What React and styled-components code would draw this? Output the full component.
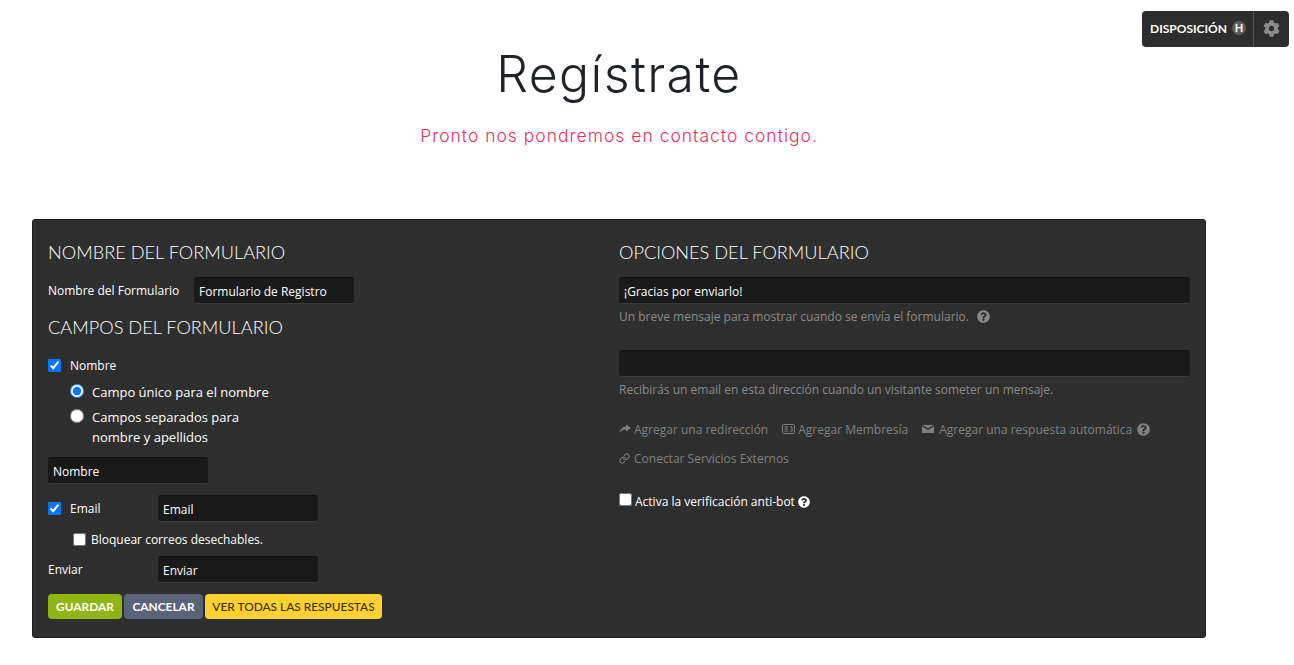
import React from "react";
import styled, { createGlobalStyle } from "styled-components";
import { FaCog, FaQuestionCircle } from "react-icons/fa";
import { Link as LinkIcon } from "lucide-react";

const GlobalStyle = createGlobalStyle`
  html, body {
    margin: 0;
    padding: 0;
    background: #fff;
  }
  body {
    font-family: "Open Sans", "Liberation Sans", sans-serif;
    font-size: 13px;
    height: 665px;
    overflow: hidden;
  }
  * {
    box-sizing: border-box;
  }
`;

const ShareIcon = () => (
  <svg width="12" height="10" viewBox="0 0 12 10" fill="currentColor">
    <path d="M7 .5 12 4 7 7.5v-2C4 5.5 2 6.5.5 9 1 5.5 3.500 3 7 2.500z" />
  </svg>
);

const CardIcon = () => (
  <svg width="13" height="10" viewBox="0 0 13 10" fill="none" stroke="currentColor">
    <rect x=".5" y=".5" width="12" height="9" rx="1" />
    <path d="M2.500 3H6M2.500 5H6M2.500 7H6M8 3h2v4M8 7h2.500" />
  </svg>
);

const EnvelopeIcon = () => (
  <svg width="12" height="8" viewBox="0 0 12 8" fill="currentColor">
    <path d="M0 0h12L6 3.500z" />
    <path d="M0 1.500 6 5l6-3.500V8H0z" />
  </svg>
);

export default function App() {
  return (
    <>
      <GlobalStyle />
      <LayoutBar>
        <LayoutLabel>
          DISPOSICIÓN
          <LayoutBadge>H</LayoutBadge>
        </LayoutLabel>
        <LayoutGear>
          <FaCog size={17} />
        </LayoutGear>
      </LayoutBar>

      <Page>
        <Hero>
          <Title>Regístrate</Title>
          <Subtitle>Pronto nos pondremos en contacto contigo.</Subtitle>
        </Hero>

        <Panel>
          <Column>
            <Heading>NOMBRE DEL FORMULARIO</Heading>
            <NameRow>
              <Label>Nombre del Formulario</Label>
              <TextInput $width={160} defaultValue="Formulario de Registro" />
            </NameRow>

            <Heading>CAMPOS DEL FORMULARIO</Heading>
            <CheckRow>
              <Check type="checkbox" defaultChecked />
              <CheckText>Nombre</CheckText>
            </CheckRow>
            <RadioRow>
              <Radio type="radio" name="nombre" defaultChecked />
              <span>Campo único para el nombre</span>
            </RadioRow>
            <RadioRow $second>
              <Radio type="radio" name="nombre" />
              <span>
                Campos separados para
                <br />
                nombre y apellidos
              </span>
            </RadioRow>
            <NombreInput $width={160} defaultValue="Nombre" />

            <FieldRow>
              <FieldLabel>
                <Check type="checkbox" defaultChecked />
                <CheckText>Email</CheckText>
              </FieldLabel>
              <TextInput $width={160} defaultValue="Email" />
            </FieldRow>
            <BlockRow>
              <SmallCheck type="checkbox" />
              <span>Bloquear correos desechables.</span>
            </BlockRow>
            <FieldRow $tight>
              <FieldLabel>Enviar</FieldLabel>
              <TextInput $width={160} defaultValue="Enviar" />
            </FieldRow>

            <Buttons>
              <Button $bg="#8fb512" $color="#fff" $width={74}>GUARDAR</Button>
              <Button $bg="#5a6478" $color="#fff" $width={79}>CANCELAR</Button>
              <Button $bg="#ffd032" $color="#3a3208" $width={177} $weight={500}>
                VER TODAS LAS RESPUESTAS
              </Button>
            </Buttons>
          </Column>

          <Column>
            <Heading>OPCIONES DEL FORMULARIO</Heading>
            <FirstInput $wide defaultValue="¡Gracias por enviarlo!" />
            <Hint>
              Un breve mensaje para mostrar cuando se envía el formulario.
              <HintIcon>
                <FaQuestionCircle size={13} />
              </HintIcon>
            </Hint>
            <EmailInput $wide />
            <Hint>
              Recibirás un email en esta dirección cuando un visitante someter
              un mensaje.
            </Hint>

            <Links>
              <ActionLink $gap={3}>
                <ShareIcon />
                Agregar una redirección
              </ActionLink>
              <ActionLink $gap={3}>
                <CardIcon />
                Agregar Membresía
              </ActionLink>
              <ActionLink $gap={5}>
                <EnvelopeIcon />
                Agregar una respuesta automática
                <FaQuestionCircle size={13} />
              </ActionLink>
              <ActionLink>
                <LinkIcon size={11} strokeWidth={2.2} />
                Conectar Servicios Externos
              </ActionLink>
            </Links>

            <BotRow>
              <BotCheck type="checkbox" />
              <span>Activa la verificación anti-bot</span>
              <FaQuestionCircle size={12} color="#fff" />
            </BotRow>
          </Column>
        </Panel>
      </Page>
    </>
  );
}

const LayoutBar = styled.div`
  position: absolute;
  top: 11px;
  left: 1142px;
  width: 147px;
  height: 36px;
  display: flex;
  align-items: center;
  background: #2d2d2d;
  border-radius: 4px;
  color: #fff;
`;

const LayoutLabel = styled.div`
  flex: 1;
  height: 100%;
  display: flex;
  align-items: center;
  padding: 0 0 2px 8px;
  font-family: "Lato", sans-serif;
  font-size: 12px;
  font-weight: 700;
`;

const LayoutBadge = styled.span`
  width: 14px;
  height: 14px;
  margin-left: 5px;
  border-radius: 50%;
  background: #5b5b5b;
  font-size: 11px;
  line-height: 14px;
  text-align: center;
`;

const LayoutGear = styled.div`
  width: 36px;
  height: 100%;
  padding-bottom: 2px;
  display: flex;
  align-items: center;
  justify-content: center;
  border-left: 1px solid #555;
  color: #8b8b8b;
`;

const Page = styled.div`
  width: 1174px;
  margin-left: 32px;
`;

const Hero = styled.div`
  height: 219px;
  padding-top: 41px;
  text-align: center;
`;

const Title = styled.h1`
  margin: 0;
  font-family: "Inter", sans-serif;
  font-size: 50px;
  font-weight: 300;
  letter-spacing: 1.4px;
  line-height: 66px;
  color: #1f2328;
`;

const Subtitle = styled.div`
  margin-top: 16px;
  font-family: "Inter", sans-serif;
  font-size: 17.5px;
  font-weight: 300;
  letter-spacing: 1px;
  line-height: 26px;
  color: #e8315f;
`;

const Panel = styled.div`
  height: 419px;
  display: grid;
  grid-template-columns: 571px 571px;
  padding: 20px 15px 0;
  background: #2e2e2e;
  border: 1px solid #1c1c1c;
  border-radius: 3px;
  color: #fff;
`;

const Column = styled.div`
  display: flex;
  flex-direction: column;
  align-items: flex-start;
`;

const Heading = styled.h3`
  margin: 0;
  font-family: "Lato", sans-serif;
  font-size: 18.2px;
  font-weight: 300;
  line-height: 24px;
  color: #fff;
`;

const NameRow = styled.div`
  display: flex;
  align-items: center;
  margin: 13px 0 11px;
`;

const Label = styled.label`
  width: 146px;
  font-size: 12px;
`;

const TextInput = styled.input`
  width: ${(p) => (p.$wide ? "100%" : `${p.$width}px`)};
  flex: none;
  height: 27px;
  padding: 1px 5px 0;
  background: #191919;
  border: 0;
  border-top: 1px solid #111;
  border-bottom: 1px solid #3c3c3c;
  border-radius: 3px;
  outline: none;
  color: #fff;
  font-family: inherit;
  font-size: 12px;
`;

const FirstInput = styled(TextInput)`
  margin-top: 13px;
`;

const CheckRow = styled.label`
  display: flex;
  align-items: center;
  margin-top: 16px;
  height: 20px;
`;

const Check = styled.input`
  width: 13px;
  height: 13px;
  margin: 0;
  flex: none;
`;

const CheckText = styled.span`
  margin-left: 9px;
  font-size: 12px;
`;

const RadioRow = styled.label`
  display: flex;
  align-items: flex-start;
  margin: ${(p) => (p.$second ? "5px" : "7px")} 0 0 22px;
  font-size: 13px;
  line-height: 20px;
`;

const Radio = styled.input`
  width: 14px;
  height: 14px;
  margin: 2px 8px 0 0;
  flex: none;
`;

const NombreInput = styled(TextInput)`
  margin-top: 10px;
`;

const FieldRow = styled.div`
  display: flex;
  align-items: center;
  margin-top: ${(p) => (p.$tight ? "7px" : "11px")};
  font-size: 12px;
`;

const FieldLabel = styled.label`
  width: 110px;
  display: flex;
  align-items: center;
`;

const BlockRow = styled.label`
  display: flex;
  align-items: center;
  margin: 7px 0 0 25px;
  height: 20px;
  font-size: 12px;
`;

const SmallCheck = styled.input`
  width: 13px;
  height: 13px;
  margin: 0 5px 0 0;
  flex: none;
`;

const BotCheck = styled(SmallCheck)`
  margin: 0;
  align-self: flex-start;
`;

const Buttons = styled.div`
  display: flex;
  gap: 2px;
  margin-top: 11px;
`;

const Button = styled.button`
  width: ${(p) => p.$width}px;
  height: 25px;
  padding: 0;
  background: ${(p) => p.$bg};
  border: 0;
  border-radius: 4px;
  color: ${(p) => p.$color};
  font-family: "Lato", sans-serif;
  font-size: 11.9px;
  font-weight: ${(p) => p.$weight || 700};
`;

const Hint = styled.div`
  margin-top: 3px;
  color: #8a8a8a;
  font-size: 12px;
  line-height: 20px;
`;

const HintIcon = styled.span`
  margin-left: 8px;
  vertical-align: -2px;
`;

const EmailInput = styled(TextInput)`
  margin-top: 21px;
`;

const Links = styled.div`
  display: flex;
  flex-wrap: wrap;
  width: 100%;
  margin-top: 19px;
  row-gap: 9px;
  column-gap: 14px;
`;

const ActionLink = styled.a`
  display: inline-flex;
  align-items: center;
  gap: ${(p) => p.$gap || 4}px;
  height: 20px;
  color: #808080;
  font-size: 12px;
`;

const BotRow = styled.label`
  display: flex;
  align-items: center;
  gap: 3px;
  margin-top: 25px;
  font-size: 12px;
  color: #fff;
`;
